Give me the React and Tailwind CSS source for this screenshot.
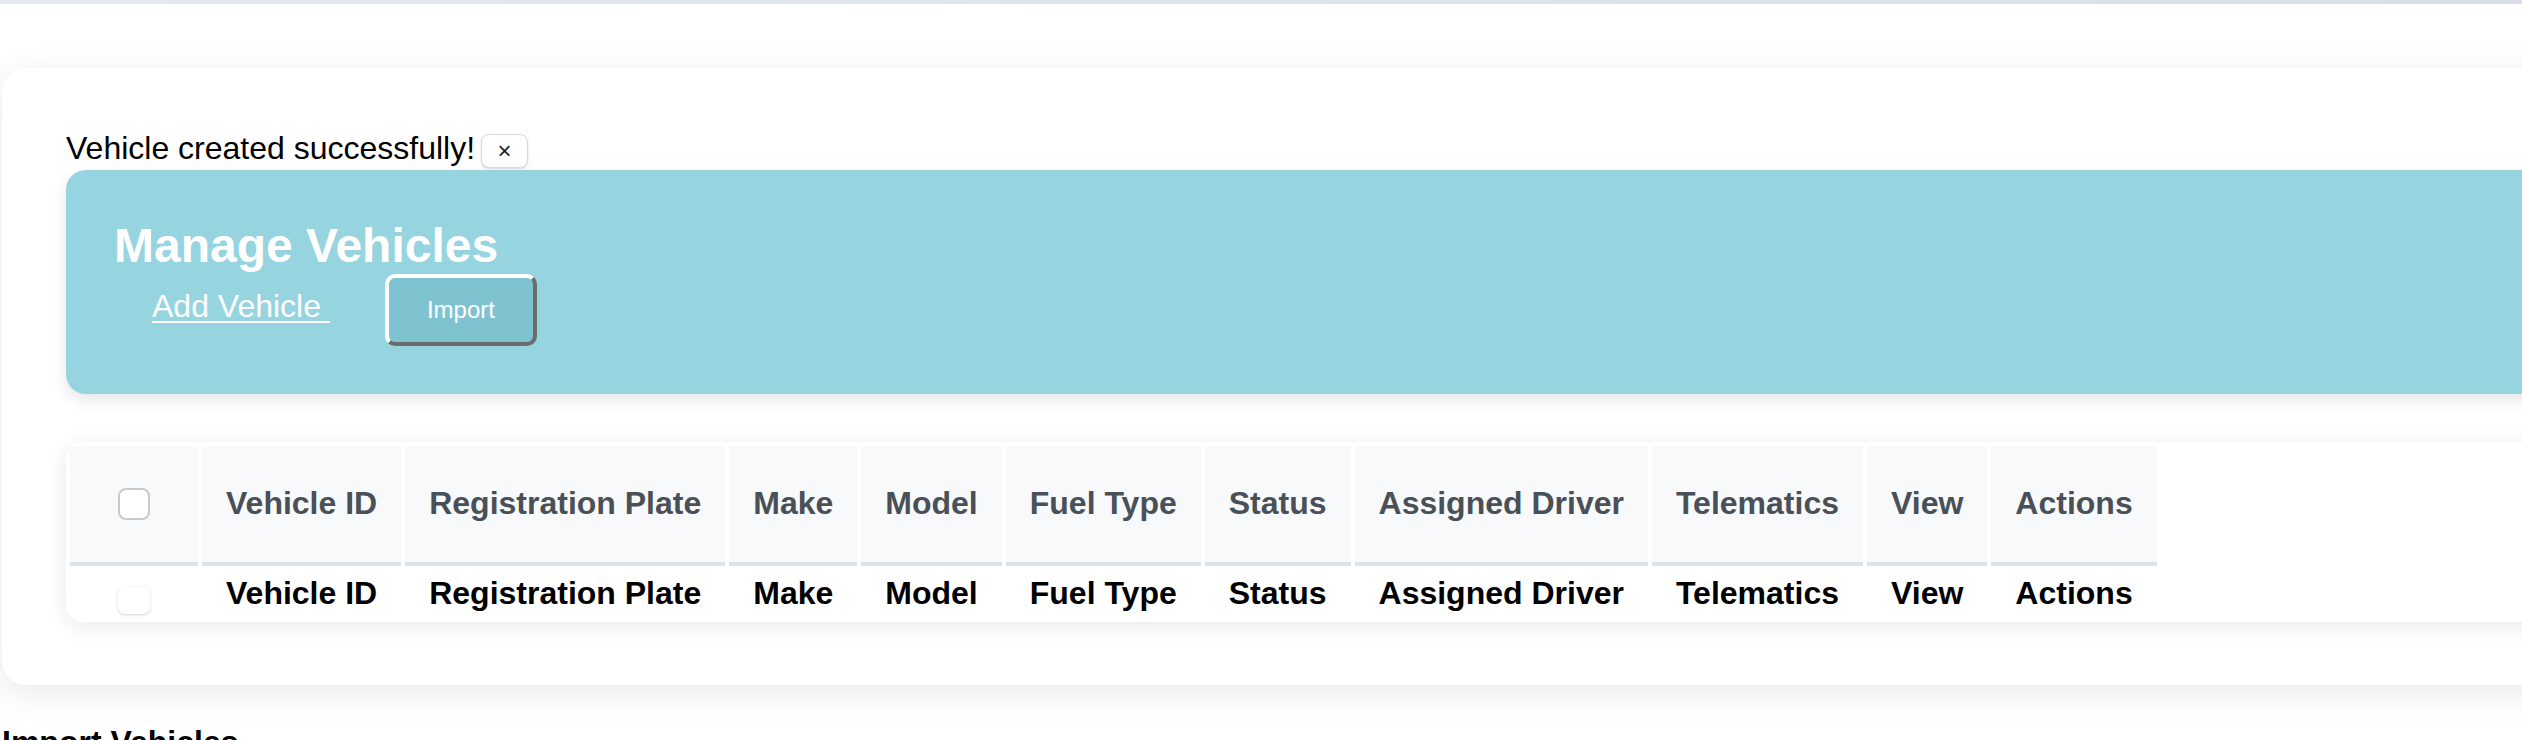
export default function App() {
  const cols = [
    "Vehicle ID",
    "Registration Plate",
    "Make",
    "Model",
    "Fuel Type",
    "Status",
    "Assigned Driver",
    "Telematics",
    "View",
    "Actions",
  ];
  return (
    <div className="w-[2522px] h-[740px] overflow-hidden bg-white font-['Liberation_Sans',Arial,Helvetica,sans-serif] text-black">
      <div className="h-[4px] bg-linear-to-r from-[#e5e8ed] to-[#d9deea]" />
      <div className="mt-[64px] ml-[2px] w-[2700px] bg-white rounded-[24px] shadow-[0_8px_36px_rgba(0,0,0,0.09)] pt-[62px] pb-[63px] px-[64px]">
        <div className="h-[40px] flex items-start">
          <span className="text-[32px] leading-[37px]">Vehicle created successfully!</span>
          <button className="ml-[6px] mt-[4px] w-[47px] h-[34px] flex items-center justify-center bg-white rounded-[8px] border border-[#d9d9d9] shadow-[0_1px_2px_rgba(0,0,0,0.15)] text-[24px] leading-none text-[#222]">
            ×
          </button>
        </div>
        <div className="h-[224px] rounded-[20px] bg-[#96d4df] shadow-[0_6px_16px_rgba(0,0,0,0.1)] pt-[48px] px-[48px]">
          <h2 className="text-[48px] leading-[55px] font-bold text-white">Manage Vehicles</h2>
          <div className="flex items-start">
            <a href="#" className="ml-[38px] mt-[15px] text-[32px] leading-[37px] text-white underline decoration-[2px] underline-offset-[4px]">
              Add Vehicle{"\u00A0"}
            </a>
            <button className="ml-[55px] mt-[1px] w-[152px] h-[72px] flex items-center justify-center rounded-[10px] bg-[#80c3d0] border-4 border-solid border-t-white border-l-white border-r-[#6c6c6c] border-b-[#6c6c6c] text-white text-[24px] leading-[28px]">
              Import
            </button>
          </div>
        </div>
        <div className="mt-[48px] h-[180px] bg-white rounded-[16px] shadow-[0_4px_22px_rgba(0,0,0,0.09)]">
          <table className="border-separate border-spacing-[4px]">
            <thead>
              <tr>
                <th className="w-[128px] bg-[#f8f9fa] border-b-4 border-[#dee2e6] py-[39px] align-middle">
                  <div className="flex justify-center">
                    <input type="checkbox" className="appearance-none w-[32px] h-[32px] rounded-[8px] border-2 border-[#c9c9c9] bg-white block" />
                  </div>
                </th>
                {cols.map((c) => (
                  <th key={c} className="bg-[#f8f9fa] border-b-4 border-[#dee2e6] pt-[39px] pb-[40px] px-[24px] text-left text-[32px] leading-[37px] font-bold text-[#495057] whitespace-nowrap">
                    {c}
                  </th>
                ))}
              </tr>
            </thead>
            <tbody>
              <tr>
                <th className="align-top pt-[2px] pb-[8px]">
                  <div className="flex justify-center">
                    <div className="mt-[15px] w-[32px] h-[27px] rounded-[7px] bg-white shadow-[0_1px_3px_rgba(0,0,0,0.18)]" />
                  </div>
                </th>
                {cols.map((c) => (
                  <th key={c} className="pt-[2px] pb-[8px] px-[24px] text-left text-[32px] leading-[38px] font-bold text-black whitespace-nowrap">
                    {c}
                  </th>
                ))}
              </tr>
            </tbody>
          </table>
        </div>
      </div>
      <h3 className="mt-[39px] ml-[2px] text-[32px] leading-[37px] font-bold text-black">Import Vehicles</h3>
    </div>
  );
}
